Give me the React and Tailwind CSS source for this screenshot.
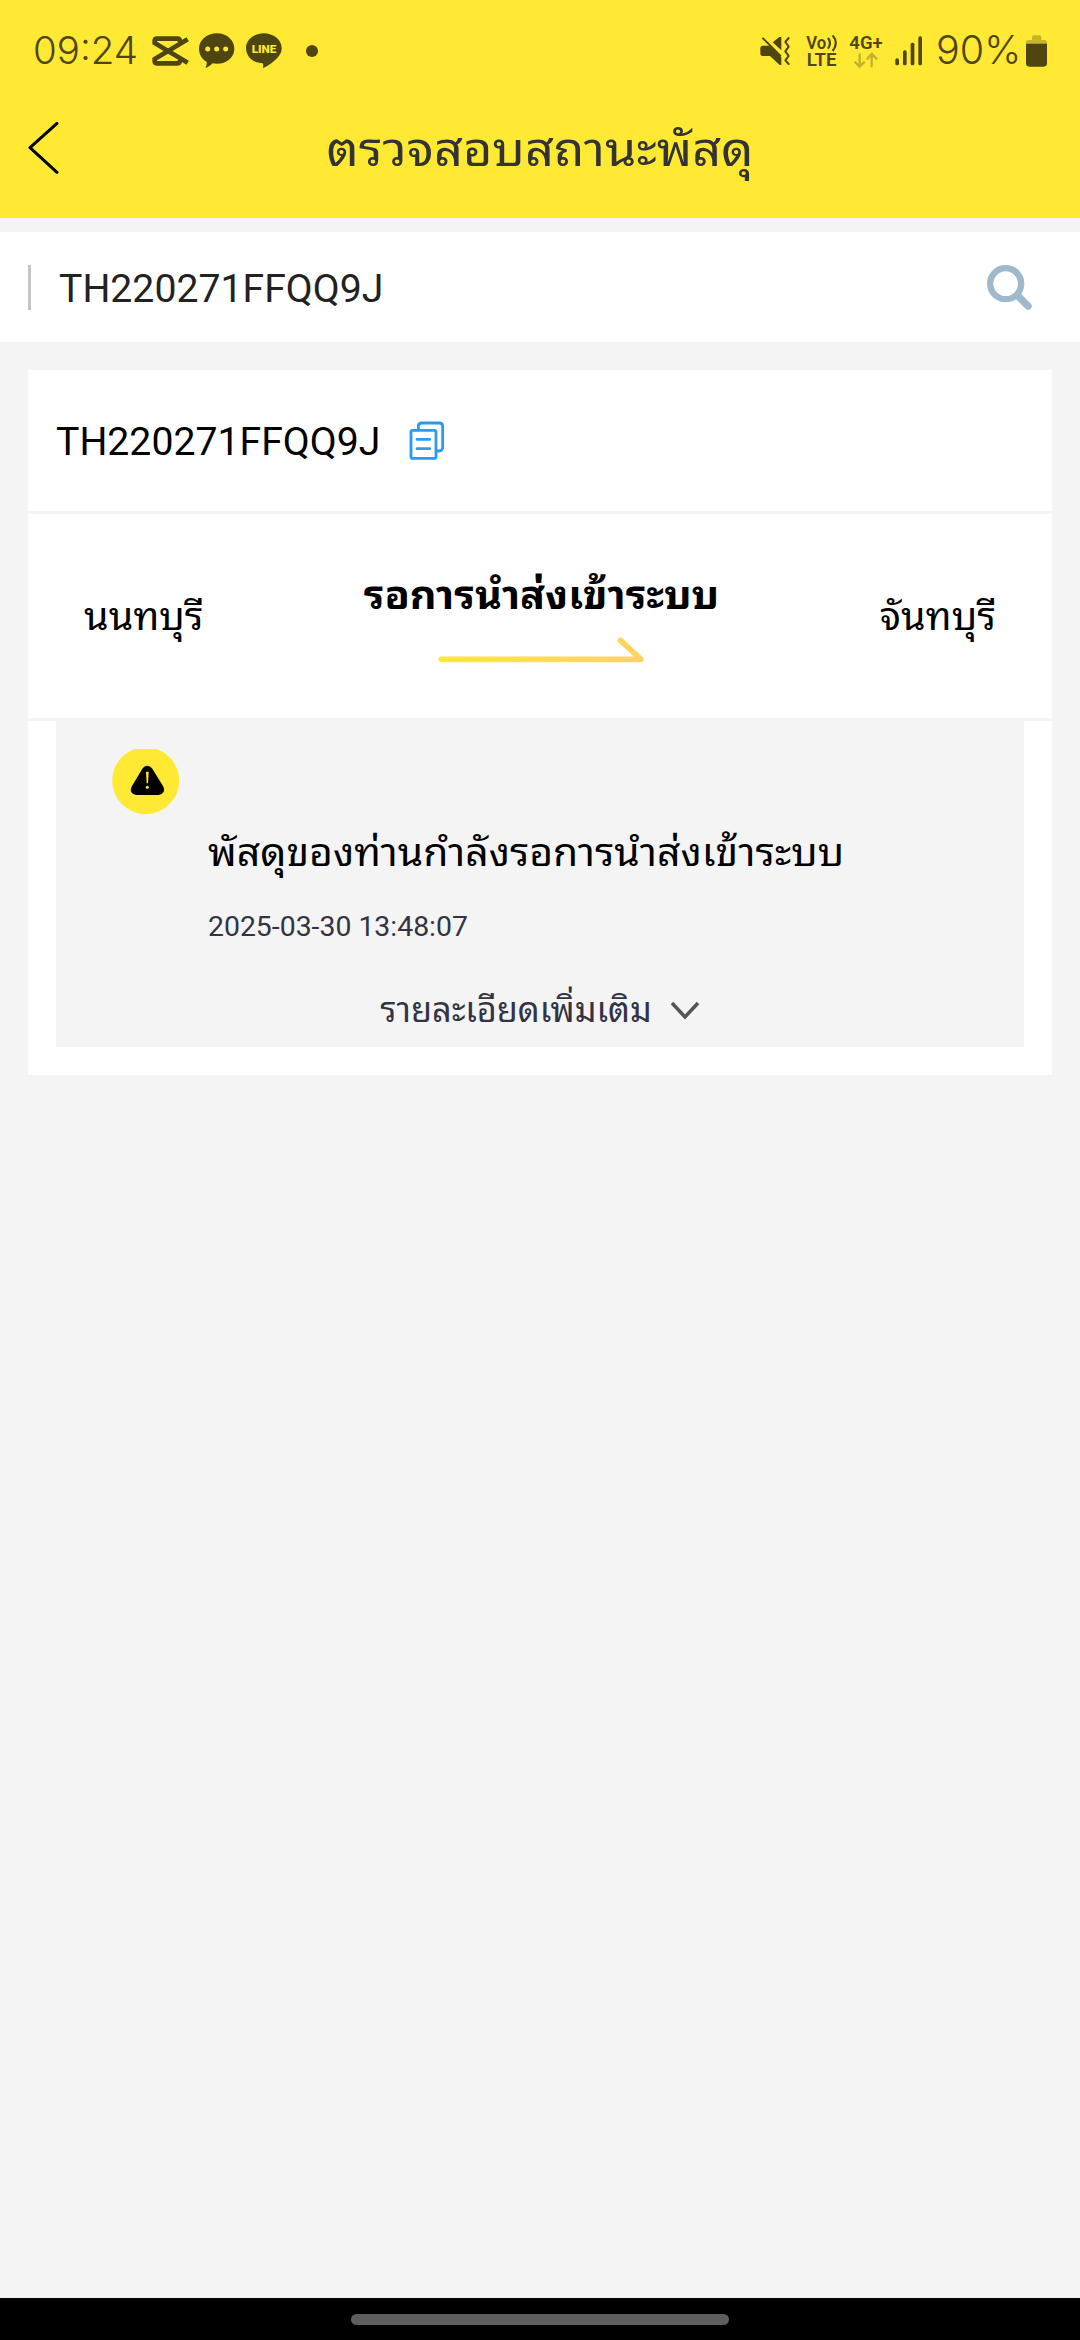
import React, { useState } from 'react';

const parcel = {
  trackingNo: 'TH220271FFQQ9J',
  origin: 'นนทบุรี',
  destination: 'จันทบุรี',
  status: 'รอการนำส่งเข้าระบบ',
  message: 'พัสดุของท่านกำลังรอการนำส่งเข้าระบบ',
  time: '2025-03-30 13:48:07',
};

const CapCutIcon = () => (
  <svg className="w-[38px] h-8" viewBox="451 106 114 96" fill="none" stroke="currentColor" strokeWidth="14">
    <path d="M561 119 L462 178 V184 Q462 191 469 191 H530 Q538 191 538 181" />
    <path d="M561 189 L462 130 V124 Q462 117 469 117 H530 Q538 117 538 127" />
  </svg>
);

const ChatIcon = () => (
  <svg className="w-9 h-9" viewBox="596 101 108 108">
    <path fill="currentColor" d="M650 102c29 0 52 20 52 46s-23 45-52 45c-5 0-9 0-13-1-6 6-14 12-22 14 3-6 5-12 4-19-14-8-23-22-23-39 0-26 24-46 54-46z" />
    <g fill="#ffe932">
      <circle cx="622" cy="149" r="7.5" />
      <circle cx="649" cy="149" r="7.5" />
      <circle cx="676" cy="149" r="7.5" />
    </g>
  </svg>
);

const LineIcon = () => (
  <svg className="w-9 h-9" viewBox="737 101 108 108">
    <path fill="currentColor" d="M790 102c30 0 54 20 54 44 0 15-8 26-22 38-12 11-25 18-34 22 0-5 2-11-1-14-29-1-50-21-50-46 0-24 24-44 53-44z" />
    <text x="754" y="161" fill="#ffe932" className="font-[Roboto] text-[34px] font-black" textLength="74" lengthAdjust="spacingAndGlyphs">LINE</text>
  </svg>
);

const MuteVibrateIcon = () => (
  <svg className="w-[31px] h-[30px]" viewBox="116 108 93 90">
    <g fill="currentColor">
      <path d="M124 137 H144 L180 172 V195 H175 L146 168 H124 Q117 168 117 160 V145 Q117 137 124 137z" />
      <path d="M154 127 L174 111 H180 V151z" />
    </g>
    <g fill="none" stroke="currentColor" strokeWidth="6" strokeLinecap="round">
      <path d="M125 115 L177 167" />
      <path strokeLinejoin="round" d="M202 114 L192 126 L202 140 L192 154 L202 168 L192 181 L202 192" />
    </g>
  </svg>
);

const VolteIcon = () => (
  <svg className="w-8 h-[34px] overflow-visible" viewBox="255 102 96 102" fill="currentColor">
    <text x="256" y="147" className="font-[Roboto] text-[54px] font-semibold" textLength="60" lengthAdjust="spacingAndGlyphs">Vo</text>
    <text x="257" y="198" className="font-[Roboto] text-[54px] font-semibold" textLength="90" lengthAdjust="spacingAndGlyphs">LTE</text>
    <g fill="none" stroke="currentColor" strokeWidth="6.5">
      <path d="M321 114 Q333 129 321 146" />
      <path d="M335 106 Q354 129 335 153" />
    </g>
  </svg>
);

const NetworkIcon = () => (
  <svg className="w-[34px] h-[34px] overflow-visible" viewBox="383 102 102 102">
    <text x="384" y="147" fill="currentColor" className="font-[Roboto] text-[54px] font-semibold" textLength="100" lengthAdjust="spacingAndGlyphs">4G+</text>
    <g fill="none" stroke="#c2b22b" strokeWidth="7" strokeLinecap="round" strokeLinejoin="round">
      <path d="M415 163 V199 M402 187 L415 200 L428 187" />
      <path d="M451 199 V163 M438 176 L451 161 L465 176" />
    </g>
  </svg>
);

const SignalIcon = () => (
  <svg className="w-7 h-[30px]" viewBox="521 107 84 90" fill="currentColor">
    <rect x="522" y="174" width="11" height="21" rx="5" />
    <rect x="545" y="150" width="11" height="45" rx="5" />
    <rect x="568" y="127" width="11" height="68" rx="5" />
    <rect x="591" y="108" width="11" height="87" rx="5" />
  </svg>
);

const BatteryIcon = () => (
  <svg className="w-[21px] h-8" viewBox="918 105 63 96">
    <path fill="#c5b52a" d="M918 134 V128 Q918 120 926 120 H936 V111 Q936 106 942 106 H958 Q964 106 964 111 V120 H973 Q981 120 981 128 V134z" />
    <path fill="currentColor" d="M918 131 H981 V190 Q981 200 971 200 H928 Q918 200 918 190z" />
  </svg>
);

const CopyIcon = () => (
  <svg className="w-9 h-10" viewBox="1228 602 108 120" fill="none" stroke="#2b9af0" strokeWidth="8.5" strokeLinecap="round">
    <rect x="1234" y="630" width="75" height="84" rx="5" />
    <path d="M1256 627 V618 Q1256 608 1266 608 H1319 Q1329 608 1329 618 V681 Q1329 692 1318 692 H1312" />
    <path d="M1252 657 H1290 M1252 685 H1290" />
  </svg>
);

const SearchIcon = () => (
  <svg className="w-[45px] h-[45px]" viewBox="261 135 135 135" fill="none" stroke="#9fb8cb">
    <circle cx="317" cy="191" r="46.5" strokeWidth="19" />
    <path d="M353 227 L384 258" strokeWidth="22" strokeLinecap="round" />
  </svg>
);

const RouteArrow = () => (
  <svg className="w-[207px] h-[27px]" viewBox="292 259 621 81" fill="none">
    <defs>
      <linearGradient id="route" gradientUnits="userSpaceOnUse" x1="292" y1="0" x2="913" y2="0">
        <stop offset="0" stopColor="#ffe834" />
        <stop offset="0.5" stopColor="#ffdf4c" />
        <stop offset="1" stopColor="#ffd261" />
      </linearGradient>
    </defs>
    <path d="M302 326 H901 L839 269" stroke="url(#route)" strokeWidth="17" strokeLinecap="round" strokeLinejoin="round" />
  </svg>
);

const WarningBadge = () => (
  <svg className="w-[67px] h-[66px]" viewBox="336 747 201 198">
    <circle cx="437" cy="842" r="100.5" fill="#ffe932" />
    <path d="M442 797 Q451 797 456 805 L489 858 Q495 869 490 877 Q486 885 476 885 H409 Q399 885 394 877 Q390 869 396 858 L428 805 Q433 797 442 797z" fill="#000" />
    <path d="M438 815 H446 L444 850 H440z" fill="#ffe932" />
    <circle cx="442" cy="862" r="4.5" fill="#ffe932" />
  </svg>
);

const StatusBar = () => (
  <div className="flex h-[102px] items-center justify-between pl-[33px] pr-[33px] text-[#4e4510]">
    <div className="flex items-center">
      <span className="w-[118px] font-[Inter] text-[38.5px] font-light">09:24</span>
      <CapCutIcon />
      <span className="ml-[10px] flex gap-[11px]">
        <ChatIcon />
        <LineIcon />
      </span>
      <span className="ml-6 size-3 rounded-full bg-[#4e4510]" />
    </div>
    <div className="flex items-center">
      <MuteVibrateIcon />
      <span className="ml-[15px] flex gap-[11px]">
        <VolteIcon />
        <NetworkIcon />
      </span>
      <span className="ml-3 flex"><SignalIcon /></span>
      <span className="ml-[13px] w-[90px] font-[Inter] text-[39.5px] font-light">90%</span>
      <BatteryIcon />
    </div>
  </div>
);

const Header = () => (
  <header className="h-[218px] bg-[#ffe932]">
    <StatusBar />
    <div className="flex h-[92px] items-center px-7">
      <button className="w-20">
        <svg className="w-8 h-[54px]" viewBox="84 362 96 162" fill="none" stroke="#000" strokeWidth="9" strokeLinecap="round" strokeLinejoin="round">
          <path d="M171 369 L90 442 L171 516" />
        </svg>
      </button>
      <h1 className="flex-1 scale-x-[1.05] pt-1 text-center text-[48px] leading-[60px] text-[#333]">ตรวจสอบสถานะพัสดุ</h1>
      <div className="w-20" />
    </div>
  </header>
);

const App = () => {
  const [query, setQuery] = useState(parcel.trackingNo);

  return (
    <div className="flex h-[2340px] w-[1080px] flex-col overflow-hidden bg-[#f4f4f4] font-[Roboto,'Noto_Sans_Thai_Looped','Noto_Sans_Thai','Noto_Sans',sans-serif] text-black">
      <Header />

      {/* Search */}
      <div className="mt-[14px] flex h-[110px] items-center bg-white pl-7 pr-[48px]">
        <div className="h-[45px] w-[3px] bg-[#c4c4c4]" />
        <input
          value={query}
          onChange={(e) => setQuery(e.target.value)}
          className="ml-7 h-[60px] flex-1 pt-1 text-[39.2px] text-[#222] outline-none"
        />
        <button><SearchIcon /></button>
      </div>

      {/* Result card */}
      <div className="mx-7 mt-7 h-[705px] bg-white">
        <div className="flex h-[144px] items-center border-b-3 border-[#f4f4f4] px-7">
          <span className="pt-1 text-[39.2px]">{parcel.trackingNo}</span>
          <button className="ml-[29px]"><CopyIcon /></button>
        </div>

        <div className="flex h-[207px] items-center justify-between border-b-3 border-[#f4f4f4] px-14 text-[39.2px]">
          <span className="origin-left scale-x-[1.01] pt-0.5">{parcel.origin}</span>
          <div className="flex flex-col items-center">
            <span className="scale-x-[1.055] font-bold leading-[54px]">{parcel.status}</span>
            <span className="mt-[14px]"><RouteArrow /></span>
          </div>
          <span className="origin-right scale-x-[1.01] pt-0.5">{parcel.destination}</span>
        </div>

        <div className="mx-7 h-[326px] bg-[#f4f4f4] px-14 pt-7">
          <WarningBadge />
          <div className="ml-[96px] mt-[11px] origin-left scale-x-[1.044] whitespace-nowrap text-[39.2px] leading-[54px]">{parcel.message}</div>
          <div className="ml-[96px] mt-[29px] text-[28.4px] leading-[36px] text-[#334]">{parcel.time}</div>
          <button className="mx-auto mt-10 flex items-center text-[34.3px] leading-[50px] text-[#334]">
            <span>รายละเอียดเพิ่มเติม</span>
            <svg className="ml-[18px] w-[30px] h-[20px]" viewBox="0 0 30 20" fill="none" stroke="#555" strokeWidth="3.5">
              <path d="M2 3 L15 17 L28 3" />
            </svg>
          </button>
        </div>
      </div>

      {/* Gesture bar */}
      <div className="mt-auto flex h-[42px] justify-center bg-black pt-4">
        <div className="h-[11px] w-[378px] rounded-full bg-[#5e5e5e]" />
      </div>
    </div>
  );
};

export default App;
